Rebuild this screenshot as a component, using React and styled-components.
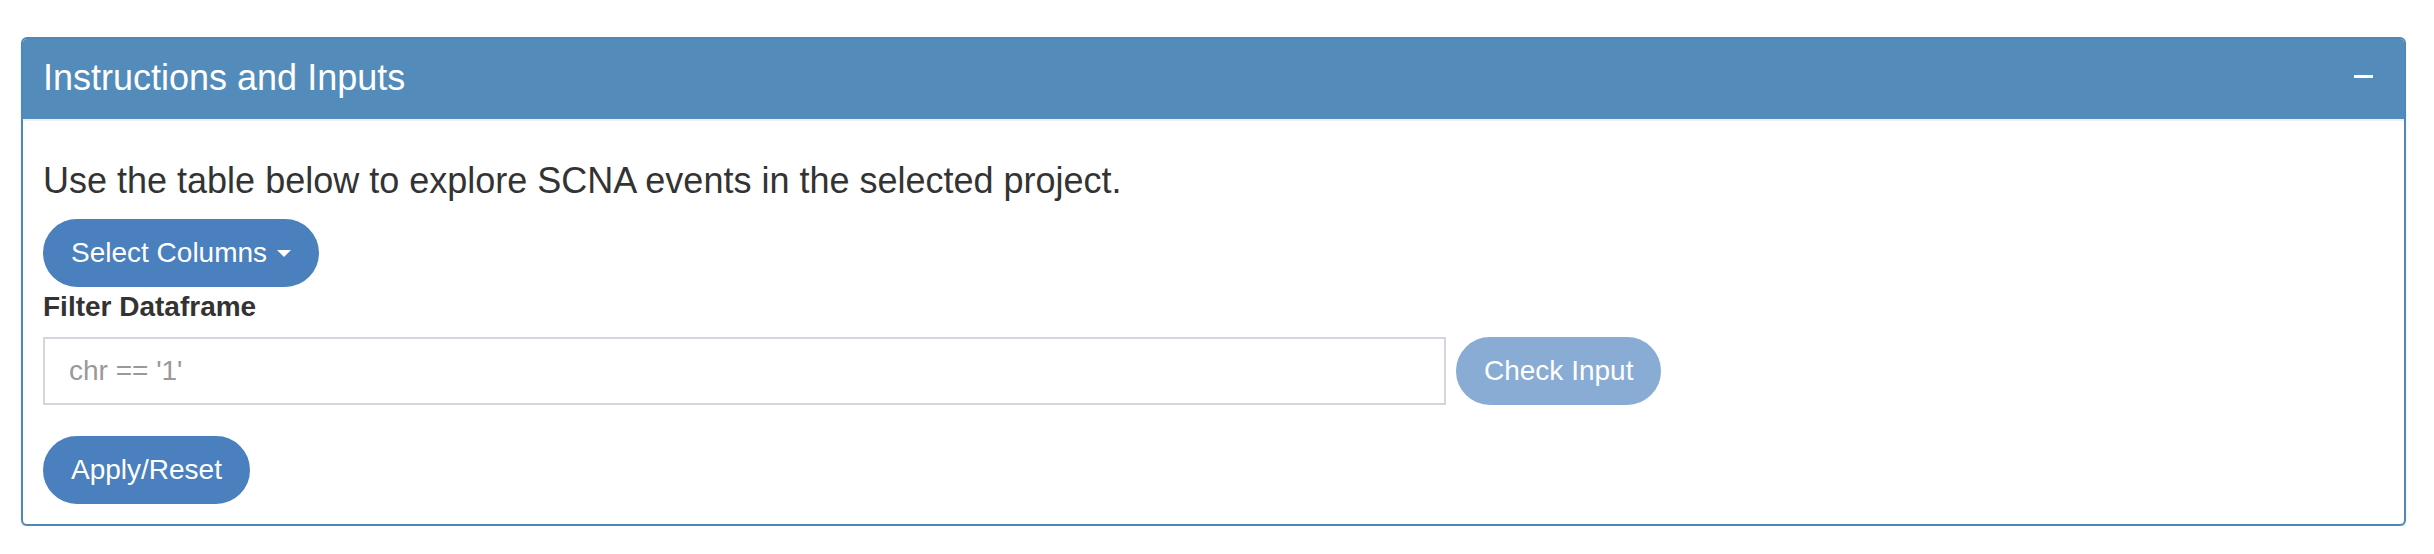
import React from 'react'
import styled, { createGlobalStyle } from 'styled-components'

const GlobalStyle = createGlobalStyle`
    html, body {
        margin: 0;
        padding: 0;
        background: #fff;
    }
    body {
        font-family: "Liberation Sans", Arial, Helvetica, sans-serif;
        color: #333;
    }
    * {
        box-sizing: border-box;
    }
`

const Page = styled.div`
    padding: 37px 28px 0 21px;
`

const Box = styled.div`
    border: 2px solid #4f88b8;
    border-radius: 6px;
    background: #fff;
    box-shadow: 0 2px 2px rgba(0, 0, 0, 0.12);
    overflow: hidden;
`

const Header = styled.div`
    display: flex;
    justify-content: space-between;
    align-items: flex-start;
    height: 82px;
    padding: 21px 31px 0 20px;
    background: #538bba;
    border-bottom: 2px solid #eef1f4;
    color: #fff;
`

const Title = styled.h3`
    margin: 0;
    font-size: 36px;
    font-weight: normal;
    line-height: 1;
`

const Collapse = styled.span`
    display: block;
    width: 19px;
    height: 3px;
    margin-top: 15px;
    background: #fff;
`

const Body = styled.div`
    padding: 34px 20px 20px;
`

const Intro = styled.p`
    margin: 0 0 12px;
    font-size: 36px;
    line-height: 52px;
`

const Button = styled.button`
    display: inline-flex;
    align-items: center;
    height: 68px;
    padding: 12px 26px;
    border: 2px solid ${props => props.disabled ? '#89acd4' : '#4a80bd'};
    border-radius: 34px;
    background: ${props => props.disabled ? '#89acd4' : '#4a80bd'};
    color: #fff;
    font-family: inherit;
    font-size: 28px;
    line-height: 40px;
    white-space: nowrap;
    cursor: ${props => props.disabled ? 'not-allowed' : 'pointer'};
`

const Caret = styled.span`
    display: inline-block;
    width: 0;
    height: 0;
    margin-left: 10px;
    border-top: 7px solid #fff;
    border-left: 7px solid transparent;
    border-right: 7px solid transparent;
`

const Label = styled.label`
    display: block;
    margin: 0 0 10px;
    font-size: 28px;
    font-weight: bold;
    line-height: 40px;
`

const InputRow = styled.div`
    display: flex;
    align-items: center;
    gap: 10px;
    margin-bottom: 31px;
`

const TextInput = styled.input`
    width: 1403px;
    height: 68px;
    padding: 0 24px;
    border: 2px solid #d2d6de;
    border-radius: 0;
    font-family: inherit;
    font-size: 28px;
    color: #555;
    outline: none;

    &::placeholder {
        color: #999;
    }
`

const App = () => {
    return (
        <>
            <GlobalStyle />
            <Page>
                <Box>
                    <Header>
                        <Title>Instructions and Inputs</Title>
                        <Collapse />
                    </Header>
                    <Body>
                        <Intro>Use the table below to explore SCNA events in the selected project.</Intro>
                        <Button type="button">Select Columns<Caret /></Button>
                        <Label htmlFor="filter">Filter Dataframe</Label>
                        <InputRow>
                            <TextInput id="filter" type="text" placeholder="chr == '1'" />
                            <Button type="button" disabled>Check Input</Button>
                        </InputRow>
                        <Button type="button">Apply/Reset</Button>
                    </Body>
                </Box>
            </Page>
        </>
    )
}

export default App
